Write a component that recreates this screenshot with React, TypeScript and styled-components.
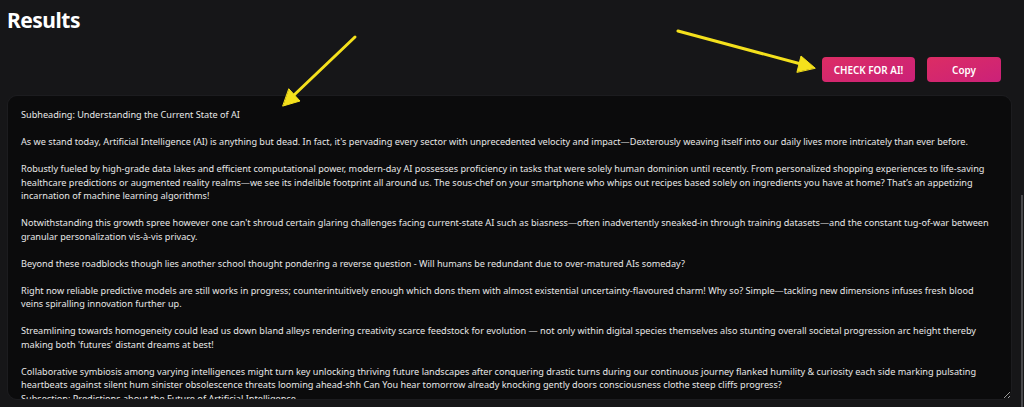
import React from "react";
import styled, { createGlobalStyle } from "styled-components";

const Global = createGlobalStyle`
  html, body {
    margin: 0;
    padding: 0;
    background: #161618;
    overflow: hidden;
  }
  body {
    font-family: "Noto Sans", "Open Sans", sans-serif;
  }
`;

const Page = styled.div`
  position: relative;
  width: 1024px;
  height: 407px;
  box-sizing: border-box;
  padding: 6px 12px 0 7px;
  display: flex;
  flex-direction: column;
`;

const Title = styled.h1`
  margin: 0;
  font-size: 21px;
  line-height: 28px;
  font-weight: 700;
  letter-spacing: -0.5px;
  color: #ffffff;
`;

const Toolbar = styled.div`
  display: flex;
  justify-content: flex-end;
  gap: 12px;
  margin-top: 23px;
  padding-right: 11px;
`;

const ActionButton = styled.button<{ $w: number }>`
  width: ${(p) => p.$w}px;
  height: 25px;
  border: none;
  border-radius: 4px;
  background: linear-gradient(160deg, #dc2d64 0%, #cb2179 100%);
  color: #fff;
  font-family: "Noto Sans", sans-serif;
  font-size: 9.9px;
  font-weight: 600;
  padding: 0;
  cursor: pointer;
`;

const Output = styled.textarea`
  margin-top: 13px;
  height: 305px;
  box-sizing: border-box;
  width: 100%;
  padding: 12px 13px;
  border: 1px solid #1c1c1f;
  border-radius: 10px;
  background: #0b0b0c;
  color: #e8e8e8;
  font-family: "Noto Sans", sans-serif;
  font-size: 9.15px;
  line-height: 13.5px;
  resize: both;
  outline: none;
  color-scheme: dark;
  scrollbar-width: none;
  overflow: auto;
`;

const ScrollThumb = styled.div`
  position: absolute;
  right: 1px;
  top: 195px;
  bottom: 0;
  width: 2px;
  background: #48484b;
`;

const Overlay = styled.svg`
  position: absolute;
  left: 0;
  top: 0;
  pointer-events: none;
`;

const TEXT = `Subheading: Understanding the Current State of AI

As we stand today, Artificial Intelligence (AI) is anything but dead. In fact, it's pervading every sector with unprecedented velocity and impact—Dexterously weaving itself into our daily lives more intricately than ever before.

Robustly fueled by high-grade data lakes and efficient computational power, modern-day AI possesses proficiency in tasks that were solely human dominion until recently. From personalized shopping experiences to life-saving healthcare predictions or augmented reality realms—we see its indelible footprint all around us. The sous-chef on your smartphone who whips out recipes based solely on ingredients you have at home? That’s an appetizing incarnation of machine learning algorithms!

Notwithstanding this growth spree however one can't shroud certain glaring challenges facing current-state AI such as biasness—often inadvertently sneaked-in through training datasets—and the constant tug-of-war between granular personalization vis-à-vis privacy.

Beyond these roadblocks though lies another school thought pondering a reverse question - Will humans be redundant due to over-matured AIs someday?

Right now reliable predictive models are still works in progress; counterintuitively enough which dons them with almost existential uncertainty-flavoured charm! Why so? Simple—tackling new dimensions infuses fresh blood veins spiralling innovation further up.

Streamlining towards homogeneity could lead us down bland alleys rendering creativity scarce feedstock for evolution — not only within digital species themselves also stunting overall societal progression arc height thereby making both 'futures' distant dreams at best!

Collaborative symbiosis among varying intelligences might turn key unlocking thriving future landscapes after conquering drastic turns during our continuous journey flanked humility & curiosity each side marking pulsating heartbeats against silent hum sinister obsolescence threats looming ahead-shh Can You hear tomorrow already knocking gently doors consciousness clothe steep cliffs progress?
Subsection: Predictions about the Future of Artificial Intelligence

Experts foresee a future where AI collaborates with humans rather than replacing them.`;

export default function App() {
  return (
    <>
      <Global />
      <Page>
        <Title>Results</Title>
        <Toolbar>
          <ActionButton $w={93}>CHECK FOR AI!</ActionButton>
          <ActionButton $w={74}>Copy</ActionButton>
        </Toolbar>
        <Output defaultValue={TEXT} spellCheck={false} />
        <ScrollThumb />
        <Overlay width="1024" height="407" viewBox="0 0 1024 407">
          <g stroke="#f4e01c" strokeWidth="3" strokeLinecap="round" fill="#f4e01c">
            <line x1="355" y1="37" x2="293" y2="96" />
            <polygon points="283,106 300,101 289,89" strokeWidth="1" strokeLinejoin="round" />
            <line x1="678" y1="31" x2="801" y2="64" />
            <polygon points="815,68 801,56 797,72" strokeWidth="1" strokeLinejoin="round" />
          </g>
        </Overlay>
      </Page>
    </>
  );
}
